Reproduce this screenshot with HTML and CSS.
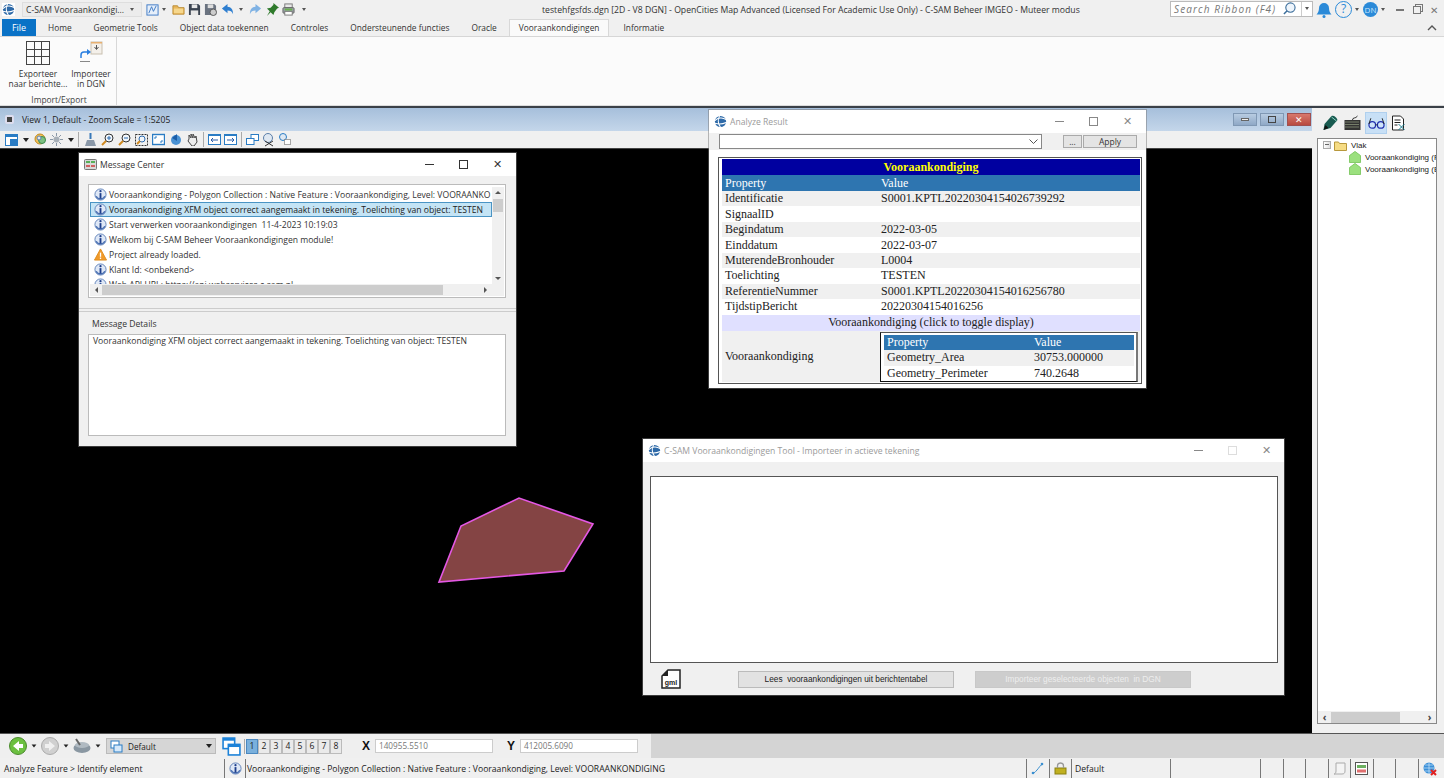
FILE: index.html
```html
<!DOCTYPE html>
<html lang="nl">
<head>
<meta charset="utf-8">
<title>OpenCities Map</title>
<link rel="stylesheet" href="styles.css">
</head>
<body>
<svg class="defs" width="0" height="0">
  <defs>
    <symbol id="info" viewBox="0 0 14 14"><circle cx="7" cy="7" r="6" fill="#dfe8f6" stroke="#5d7fb8"/><path d="M1.5 9a6 6 0 0 0 11 0l-1.5-.5a4.500 4.500 0 0 1-8 0z" fill="#4f74b4"/><rect x="6" y="5.500" width="2" height="6" fill="#1f3f8c"/><circle cx="7" cy="3.400" r="1.200" fill="#1f3f8c"/></symbol>
    <symbol id="warn" viewBox="0 0 14 14"><path d="M7 1l6.500 12H.5z" fill="#f09a2a" stroke="#e08a1a"/><rect x="6.300" y="5" width="1.400" height="4.500" fill="#fff"/><rect x="6.300" y="10.300" width="1.400" height="1.500" fill="#fff"/></symbol>
    <symbol id="globe" viewBox="0 0 14 14"><rect width="14" height="14" fill="#fff"/><circle cx="7" cy="7" r="6" fill="#2e6aa8"/><path d="M1 6c3-3 8-4 12-1M1 9c4 1 8 1 12-1M6 1c-2 3-2 9 1 12" fill="none" stroke="#fff" stroke-width="1.100"/></symbol>
    <symbol id="house" viewBox="0 0 13 13"><path d="M6.500.5l6 4.500v7.500h-12V5z" fill="#9be07e" stroke="#7cc760"/></symbol>
  </defs>
</svg>
<div class="app">
  <header class="titlebar">
    <svg class="ic13 ml2"><use href="#globe"/></svg>
    <div class="workflow"><span>C-SAM Vooraankondigi...</span><i class="caret-sm"></i></div>
    <svg class="qat" viewBox="0 0 14 14"><rect x="1" y="2" width="12" height="11" fill="#e6effa" stroke="#3b78c4"/><path d="M3 11l3-7 2 5 3-6" stroke="#3b78c4" fill="none"/></svg>
    <i class="caret-sm gap-a"></i>
    <svg class="qat gap-b" viewBox="0 0 14 14"><path d="M1 3h5l1 2h6v7H1z" fill="#eab75a" stroke="#b98a34"/><rect x="2" y="6" width="10" height="5" fill="#f6d78c"/></svg>
    <svg class="qat gap-c" viewBox="0 0 14 14"><path d="M1 1h10l2 2v10H1z" fill="#3a4350"/><rect x="4" y="1.500" width="6" height="4" fill="#e8e8e8"/><rect x="3" y="8" width="8" height="5" fill="#e8e8e8"/></svg>
    <svg class="qat gap-c" viewBox="0 0 14 14"><path d="M1 1h10l2 2v10H1z" fill="#6a7380"/><rect x="4" y="1.500" width="6" height="4" fill="#ddd"/><circle cx="10" cy="10" r="3.500" fill="#ccc" stroke="#555"/></svg>
    <svg class="qat gap-d" viewBox="0 0 14 14"><path d="M1 6l6-5v3c4 0 6 3 6 8-1-3-3-4-6-4v3z" fill="#2f7fd0"/></svg>
    <i class="caret-sm gap-e"></i>
    <svg class="qat gap-f" viewBox="0 0 14 14"><path d="M13 6L7 1v3C3 4 1 7 1 12c1-3 3-4 6-4v3z" fill="#7fb2e4"/></svg>
    <svg class="qat gap-g" viewBox="0 0 14 14"><path d="M8 0l6 5-2 1-3 4-1 3-3-3-4 4 3-5-3-3 4-1 3-3z" fill="#2f7a2c"/></svg>
    <svg class="qat gap-h" viewBox="0 0 14 14"><rect x="3" y="1" width="8" height="4" fill="#e8e8e8" stroke="#777"/><rect x="1" y="5" width="12" height="6" rx="1" fill="#9aa3a8" stroke="#666"/><rect x="3" y="9" width="8" height="4" fill="#fff" stroke="#777"/><rect x="3" y="6" width="8" height="2" fill="#68b04c"/></svg>
    <i class="caret-sm gap-i"></i>
    <div class="doc-title">testehfgsfds.dgn [2D - V8 DGN] - OpenCities Map Advanced (Licensed For Academic Use Only) - C-SAM Beheer IMGEO - Muteer modus</div>
    <div class="search"><em>Search Ribbon (F4)</em><svg class="qat" viewBox="0 0 14 14"><circle cx="8" cy="6" r="5" fill="#eef5fc" stroke="#3d6f9c" stroke-width="1.200"/><path d="M4.500 9.500L1 13" stroke="#3d6f9c" stroke-width="1.600"/></svg><span class="search-sep"></span><i class="caret-sm"></i></div>
    <svg class="bell" viewBox="0 0 16 16"><path d="M8 1a5 5 0 0 1 5 5c0 3 1 5 2.500 6.500h-15C2 11 3 9 3 6a5 5 0 0 1 5-5z" fill="#2b8ad8"/><circle cx="8" cy="14.500" r="1.500" fill="#2b8ad8"/></svg>
    <div class="help">?</div>
    <i class="caret-sm"></i>
    <div class="avatar">DN</div>
    <i class="caret-sm"></i>
    <div class="winctl">
      <span class="min-dark"></span>
      <span class="rest-dark"></span>
      <span class="x-dark">✕</span>
    </div>
  </header>

  <nav class="tabs">
    <div class="tab-file">File</div>
    <div class="tab tab-home">Home</div>
    <div class="tab">Geometrie Tools</div>
    <div class="tab">Object data toekennen</div>
    <div class="tab">Controles</div>
    <div class="tab">Ondersteunende functies</div>
    <div class="tab">Oracle</div>
    <div class="tab tab-active">Vooraankondigingen</div>
    <div class="tab">Informatie</div>
    <svg class="collapse" viewBox="0 0 10 6"><path d="M1 5l4-4 4 4" fill="none" stroke="#555" stroke-width="1.400"/></svg>
  </nav>

  <section class="ribbon">
    <div class="rgroup">
      <div class="rbtns">
        <div class="rbtn rbtn-a">
          <div class="gridicon"><i></i><i></i><i></i><i></i><i></i><i></i><i></i><i></i><i></i></div>
          <span>Exporteer<br>naar berichte...</span>
        </div>
        <div class="rbtn rbtn-b">
          <svg class="bigic" viewBox="0 0 24 24"><rect x="12" y="1" width="11" height="12" fill="#f4f0ea" stroke="#c9c0b0"/><rect x="12" y="1" width="11" height="1.500" fill="#e8b070"/><path d="M17.500 4v4m-2-2l2 2.500 2-2.500" stroke="#555" fill="none"/><path d="M2 17v-3c0-2 1-3 3-3h4" fill="none" stroke="#2a7fe0" stroke-width="1.500"/><path d="M8 8l4 3-4 3z" fill="#2a7fe0"/><rect x="1" y="20" width="10" height="1" fill="#888"/></svg>
          <span>Importeer<br>in DGN</span>
        </div>
      </div>
      <div class="rgroup-name">Import/Export</div>
    </div>
  </section>

  <main class="stage">
    <div class="view">
      <div class="viewbar">
        <span class="viewdot"></span>
        <span class="viewtitle">View 1, Default - Zoom Scale = 1:5205</span>
        <div class="viewctl">
          <span class="vbtn"><i class="vmin"></i></span>
          <span class="vbtn"><i class="vres"></i></span>
          <span class="vbtn vclose">✕</span>
        </div>
      </div>
      <div class="viewtools">
        <svg class="vt" viewBox="0 0 13 13"><rect x=".5" y="1.500" width="12" height="11" fill="#fff" stroke="#2a7cc4"/><rect y="1" width="13" height="3" fill="#2a7cc4"/><rect x="5" y="6" width="7" height="6" fill="#2a7cc4"/></svg>
        <i class="caret vt-c1"></i>
        <svg class="vt vt-g2" viewBox="0 0 13 13"><circle cx="6" cy="6" r="5" fill="#f2c05a" stroke="#c08a20"/><circle cx="8" cy="7" r="3.500" fill="#7cc080" stroke="#3c8a50"/><circle cx="5" cy="5" r="2" fill="#e8e8e8" stroke="#5a80b0"/></svg>
        <svg class="vt vt-g3" viewBox="0 0 13 13"><circle cx="6.500" cy="6.500" r="3" fill="#a8b0b8"/><path d="M6.500 0v3M6.500 10v3M0 6.500h3M10 6.500h3M2 2l2 2M9 9l2 2M11 2L9 4M2 11l2-2" stroke="#8a98a8"/></svg>
        <i class="caret vt-c1"></i>
        <i class="tsep vt-s1"></i>
        <svg class="vt vt-g4" viewBox="0 0 13 13"><rect x="5.500" y="0" width="2" height="6" fill="#3878b8"/><path d="M3 7h7l2 6H1z" fill="#8a98a8"/></svg>
        <svg class="vt vt-g5" viewBox="0 0 13 13"><circle cx="8" cy="5" r="4" fill="#f2f6fa" stroke="#333"/><path d="M6 5h4M8 3v4" stroke="#2a6ab0"/><path d="M5 8l-4 4" stroke="#d08a20" stroke-width="2"/></svg>
        <svg class="vt vt-g5" viewBox="0 0 13 13"><circle cx="8" cy="5" r="4" fill="#f2f6fa" stroke="#333"/><path d="M6 5h4" stroke="#2a6ab0"/><path d="M5 8l-4 4" stroke="#d08a20" stroke-width="2"/></svg>
        <svg class="vt vt-g5" viewBox="0 0 13 13"><rect x=".5" y="1.500" width="12" height="11" fill="none" stroke="#333" stroke-dasharray="2 1"/><circle cx="7" cy="6" r="3" fill="#f2f6fa" stroke="#2a6ab0"/><path d="M5 8l-3 3" stroke="#d08a20" stroke-width="2"/></svg>
        <svg class="vt vt-g5" viewBox="0 0 13 13"><rect x=".5" y="1.500" width="12" height="10" fill="#fff" stroke="#2a7cc4" stroke-width="1.400"/><path d="M3 4v2M3 4h2M10 9V7M10 9H8" stroke="#2a7cc4"/></svg>
        <svg class="vt vt-g5" viewBox="0 0 13 13"><circle cx="7" cy="7" r="5" fill="#4a92d4"/><path d="M8 1L3 5l5 3z" fill="#1c5ea8"/></svg>
        <svg class="vt vt-g5" viewBox="0 0 13 13"><path d="M3 6V2l2 3V1l2 4V1l2 4 1-2 1 6-3 4H6L2 8z" fill="#eee" stroke="#444"/></svg>
        <i class="tsep vt-s2"></i>
        <svg class="vt vt-g6" viewBox="0 0 13 13"><rect x=".5" y="1.500" width="12" height="10" fill="#fff" stroke="#2a7cc4"/><rect y="1" width="13" height="2" fill="#2a7cc4"/><path d="M3 7h7M3 7l2-2M3 7l2 2" stroke="#2a5ca8"/></svg>
        <svg class="vt vt-g7" viewBox="0 0 13 13"><rect x=".5" y="1.500" width="12" height="10" fill="#fff" stroke="#2a7cc4"/><rect y="1" width="13" height="2" fill="#2a7cc4"/><path d="M3 7h7M10 7L8 5M10 7L8 9" stroke="#2a5ca8"/></svg>
        <i class="tsep vt-s3"></i>
        <svg class="vt vt-g8" viewBox="0 0 13 13"><rect x="5" y="1.500" width="7.500" height="6" fill="#fff" stroke="#2a7cc4"/><rect x=".5" y="5.500" width="7.500" height="6" fill="#fff" stroke="#2a7cc4"/></svg>
        <svg class="vt14 vt-g9" viewBox="0 0 14 14"><circle cx="6" cy="5" r="4.500" fill="#dfe8f2" stroke="#5b7ea8"/><path d="M3 8l8 5M11 8l-8 5" stroke="#333"/></svg>
        <svg class="vt vt-g10" viewBox="0 0 13 13"><circle cx="5" cy="4" r="3.500" fill="#dfe8f2" stroke="#2a7cc4"/><rect x="6.500" y="6.500" width="6" height="5" fill="#fff" stroke="#555" stroke-dasharray="1 1"/></svg>
      </div>
      <div class="canvas">
        <svg class="poly" viewBox="0 0 160 90"><polygon points="4,87 26,31 84,3 158,29 129,76" fill="#844444" stroke="#e458e4" stroke-width="1.600"/></svg>
      </div>
    </div>
    <aside class="panel">
      <div class="ptabs">
        <svg class="pt pt-a" viewBox="0 0 16 16"><path d="M1 15l1-6 7-8c2-1 5 1 6 4l-7 8z" fill="#185a50"/><path d="M9 2l5 4" stroke="#8fd4c4"/><path d="M1 15l2-5 3 3z" fill="#111"/></svg>
        <svg class="pt pt-b" viewBox="0 0 16 16"><rect y="5" width="16" height="10" fill="#333"/><path d="M1 7h14M1 9.500h14M1 12h14" stroke="#b8c8a0" stroke-dasharray="1 1"/><path d="M8 5c0-3 3-1 5-4" stroke="#333" fill="none"/></svg>
        <div class="pt-on"><svg class="pt" viewBox="0 0 18 16"><circle cx="4.500" cy="10" r="3.500" fill="#cfe4fa" stroke="#2230b0" stroke-width="1.300"/><circle cx="13.500" cy="10" r="3.500" fill="#cfe4fa" stroke="#2230b0" stroke-width="1.300"/><path d="M8 10h2M1 9l2-6M17 9l-2-6" stroke="#222" fill="none"/></svg></div>
        <svg class="pt pt-d" viewBox="0 0 16 16"><path d="M2 1h8l3 3v11H2z" fill="#fff" stroke="#222"/><path d="M4 5h6M4 7.500h6M4 10h3" stroke="#222"/><path d="M8 9l6 6M14 9l-6 6" stroke="#1c7c8c"/></svg>
      </div>
      <div class="tree">
        <div class="tree-body">
          <div class="node"><span class="minus"></span><svg class="folder" viewBox="0 0 13 11"><path d="M.5 2h4l1 1.500h7v7H.5z" fill="#f6dc84" stroke="#b8983c"/></svg><span>Vlak</span></div>
          <div class="node node-c"><svg class="ic12"><use href="#house"/></svg><span>Vooraankondiging (F</span></div>
          <div class="node node-c"><svg class="ic12"><use href="#house"/></svg><span>Vooraankondiging (E</span></div>
        </div>
        <div class="hscroll"><b>‹</b><i></i><b>›</b></div>
      </div>
    </aside>
  </main>

  <footer class="tool-row">
    <div class="tool-left">
      <svg class="nav" viewBox="0 0 18 18"><circle cx="9" cy="9" r="8.500" fill="#6cc040" stroke="#4a8a2c"/><path d="M10 4L4 9l6 5v-3h4V7h-4z" fill="#fff"/></svg>
      <i class="caret t-c"></i>
      <svg class="nav t-n2" viewBox="0 0 18 18"><circle cx="9" cy="9" r="8.500" fill="#d0d0d0" stroke="#aaa"/><path d="M8 4l6 5-6 5v-3H4V7h4z" fill="#f0f0f0"/></svg>
      <i class="caret t-c"></i>
      <svg class="nav t-n3" viewBox="0 0 18 18"><ellipse cx="9" cy="11" rx="8.500" ry="5" fill="#8a97a2"/><ellipse cx="9" cy="8" rx="7" ry="3" fill="#b0bac2"/><path d="M3 2l4 6" stroke="#666" stroke-width="2"/></svg>
      <i class="caret t-c"></i>
      <div class="levelsel"><svg class="ic12b" viewBox="0 0 13 13"><rect x="1" y="1" width="8" height="7" fill="#fff" stroke="#2a7cc4"/><rect x="4" y="5" width="8" height="7" fill="#d4e8fa" stroke="#2a7cc4"/></svg><span>Default</span><i class="caret"></i></div>
      <svg class="copyic" viewBox="0 0 18 18"><rect x="1" y="1" width="11" height="10" fill="#fff" stroke="#1c82d8" stroke-width="1.500"/><rect x="1" y="1" width="11" height="2.500" fill="#1c82d8"/><rect x="6" y="7" width="11" height="10" fill="#fff" stroke="#1c82d8" stroke-width="1.500"/><rect x="6" y="7" width="11" height="2.500" fill="#1c82d8"/></svg>
      <div class="nums"><span class="num num-on">1</span><span class="num">2</span><span class="num">3</span><span class="num">4</span><span class="num">5</span><span class="num">6</span><span class="num">7</span><span class="num">8</span></div>
      <b class="axis axis-x">X</b><div class="coord">140955.5510</div>
      <b class="axis axis-y">Y</b><div class="coord">412005.6090</div>
    </div>
    <div class="tool-right"></div>
  </footer>

  <footer class="status">
    <div class="st st-1">Analyze Feature &gt; Identify element</div>
    <div class="st st-ic"><svg class="ic13"><use href="#info"/></svg></div>
    <div class="st st-msg">Vooraankondiging - Polygon Collection : Native Feature : Vooraankondiging, Level: VOORAANKONDIGING</div>
    <div class="st st-ic2"><svg class="ic13" viewBox="0 0 13 13"><path d="M1 11c3 0 3-1 5-3s3-5 6-6" fill="none" stroke="#3a8fd0"/><circle cx="2" cy="11" r="1.300" fill="#3a8fd0"/><circle cx="11" cy="2" r="1.300" fill="#3a8fd0"/></svg></div>
    <div class="st st-ic2"><svg class="ic13" viewBox="0 0 13 13"><rect x="1" y="6" width="11" height="6" fill="#c0b020" stroke="#8a8010"/><path d="M3.500 6V4a3 3 0 0 1 6 0v2" fill="none" stroke="#999" stroke-width="1.300"/></svg></div>
    <div class="st st-def">Default</div>
    <div class="st st-w1"></div>
    <div class="st st-w2"></div>
    <div class="st st-w2"></div>
    <div class="st st-w2"></div>
    <div class="st st-ic2"><svg class="ic13" viewBox="0 0 13 13"><path d="M3 1h9v8c0 2-1 3-3 3H1c1 0 2-1 2-3z" fill="#f4f4f4" stroke="#aaa"/></svg></div>
    <div class="st st-ic2"><svg class="ic13" viewBox="0 0 13 13"><rect x=".5" y=".5" width="12" height="12" fill="#fff" stroke="#555"/><rect x="2" y="3" width="9" height="3" fill="#6cb060"/><rect x="2" y="7.500" width="9" height="3" fill="#e07070"/></svg></div>
    <div class="st st-w2"></div>
    <div class="st st-w2"></div>
    <div class="st st-ic2 st-last"><svg class="ic14" viewBox="0 0 14 14"><circle cx="6" cy="6" r="5.500" fill="#3a8fd8"/><path d="M1 6h10M6 .5v11M2 3h8M2 9h8" stroke="#cfe6fa" stroke-width=".7"/><path d="M8 8l5 5M13 8l-5 5" stroke="#e02020" stroke-width="2"/></svg></div>
  </footer>

  <section class="win win-msg">
    <div class="win-title">
      <svg class="ic13" viewBox="0 0 13 13"><rect x=".5" y="1.500" width="12" height="10" rx="1" fill="#d8d8d8" stroke="#777"/><rect x="2" y="3" width="4" height="2" fill="#58b058"/><rect x="7" y="3" width="4" height="2" fill="#58b058"/><rect x="2" y="7" width="4" height="2" fill="#d06060"/><rect x="7" y="7" width="4" height="2" fill="#d06060"/></svg>
      <span class="win-name">Message Center</span>
      <div class="capt"><span class="c-min"></span><span class="c-max"></span><span class="c-x">✕</span></div>
    </div>
    <div class="msg-body">
      <div class="msg-list">
        <div class="msg-rows">
          <div class="msg-lines">
            <div class="msg"><svg class="ic13"><use href="#info"/></svg><span>Vooraankondiging - Polygon Collection : Native Feature : Vooraankondiging, Level: VOORAANKO</span></div>
            <div class="msg msg-sel"><svg class="ic13"><use href="#info"/></svg><span>Vooraankondiging XFM object correct aangemaakt in tekening. Toelichting van object: TESTEN</span></div>
            <div class="msg"><svg class="ic13"><use href="#info"/></svg><span>Start verwerken vooraankondigingen&nbsp; 11-4-2023 10:19:03</span></div>
            <div class="msg"><svg class="ic13"><use href="#info"/></svg><span>Welkom bij C-SAM Beheer Vooraankondigingen module!</span></div>
            <div class="msg"><svg class="ic13"><use href="#warn"/></svg><span>Project already loaded.</span></div>
            <div class="msg"><svg class="ic13"><use href="#info"/></svg><span>Klant Id: &lt;onbekend&gt;</span></div>
            <div class="msg"><svg class="ic13"><use href="#info"/></svg><span>Web API URI : https://api.webservices.c-sam.nl</span></div>
          </div>
          <div class="vscroll"><i class="arr-up"></i><u></u><i class="arr-down"></i></div>
        </div>
        <div class="msg-h"><i class="arr-left"></i><u></u><i class="arr-right"></i></div>
      </div>
      <div class="splitter"></div>
      <div class="details-label">Message Details</div>
      <div class="details">Vooraankondiging XFM object correct aangemaakt in tekening. Toelichting van object: TESTEN</div>
    </div>
  </section>

  <section class="win win-analyze">
    <div class="win-title win-title-off">
      <svg class="ic13"><use href="#globe"/></svg>
      <span class="win-name">Analyze Result</span>
      <div class="capt capt-off"><span class="c-min"></span><span class="c-max"></span><span class="c-x">✕</span></div>
    </div>
    <div class="an-tools">
      <div class="an-combo"><svg class="chev" viewBox="0 0 9 5"><path d="M.5.500L4.500 4.500 8.500.5" fill="none" stroke="#555"/></svg></div>
      <div class="an-btn an-dots">...</div>
      <div class="an-btn an-apply">Apply</div>
    </div>
    <div class="an-body">
      <div class="an-frame">
        <table class="res">
          <colgroup><col class="col-a"><col></colgroup>
          <tr class="r-title"><td colspan="2">Vooraankondiging</td></tr>
          <tr class="r-head"><td>Property</td><td>Value</td></tr>
          <tr class="r-alt"><td>Identificatie</td><td>S0001.KPTL20220304154026739292</td></tr>
          <tr><td>SignaalID</td><td></td></tr>
          <tr class="r-alt"><td>Begindatum</td><td>2022-03-05</td></tr>
          <tr><td>Einddatum</td><td>2022-03-07</td></tr>
          <tr class="r-alt"><td>MuterendeBronhouder</td><td>L0004</td></tr>
          <tr><td>Toelichting</td><td>TESTEN</td></tr>
          <tr class="r-alt"><td>ReferentieNummer</td><td>S0001.KPTL20220304154016256780</td></tr>
          <tr><td>TijdstipBericht</td><td>20220304154016256</td></tr>
          <tr class="r-toggle"><td colspan="2">Vooraankondiging (click to toggle display)</td></tr>
          <tr class="r-alt r-nest">
            <td>Vooraankondiging</td>
            <td class="nest-cell">
              <div class="nest-frame">
                <table class="res nest">
                  <colgroup><col class="col-n"><col></colgroup>
                  <tr class="r-head"><td>Property</td><td>Value</td></tr>
                  <tr class="r-alt"><td>Geometry_Area</td><td>30753.000000</td></tr>
                  <tr><td>Geometry_Perimeter</td><td>740.2648</td></tr>
                </table>
              </div>
            </td>
          </tr>
        </table>
      </div>
    </div>
  </section>

  <section class="win win-import">
    <div class="win-title win-title-off">
      <svg class="ic13"><use href="#globe"/></svg>
      <span class="win-name">C-SAM Vooraankondigingen Tool - Importeer in actieve tekening</span>
      <div class="capt capt-off capt-imp"><span class="c-min"></span><span class="c-max c-faint"></span><span class="c-x">✕</span></div>
    </div>
    <div class="imp-body">
      <div class="imp-list"></div>
      <div class="imp-actions">
        <svg class="gml" viewBox="0 0 20 20"><path d="M7 1h12v18H1V7z" fill="#fff" stroke="#222" stroke-width="1.500"/><path d="M1 7l6-6v6z" fill="#222"/><text x="10" y="16" text-anchor="middle" class="gml-t">gml</text></svg>
        <div class="imp-btn">Lees&nbsp; vooraankondigingen uit berichtentabel</div>
        <div class="imp-btn imp-off">Importeer geselecteerde objecten&nbsp; in DGN</div>
      </div>
    </div>
  </section>
</div>
</body>
</html>
```

FILE: styles.css
```css
* { box-sizing: border-box; }
html, body { margin: 0; padding: 0; height: 100%; overflow: hidden; background: #000; }
body { font-family: "Open Sans", "Noto Sans", sans-serif; font-size: 8.6px; color: #222; }
.defs { position: absolute; }
svg { display: block; flex: none; }
i { display: block; flex: none; }

.app { position: relative; width: 1444px; height: 778px; display: flex; flex-direction: column; overflow: hidden; }
.ic12 { width: 12px; height: 12px; }
.ic13 { width: 13px; height: 13px; }
.ic14 { width: 14px; height: 14px; }
.ic12b { width: 13px; height: 13px; }
.ml2 { margin-left: 2px; }

.caret-sm { width: 0; height: 0; border: 2.5px solid transparent; border-top: 3px solid #555; border-bottom: 0; }
.caret { width: 0; height: 0; border: 3.5px solid transparent; border-top: 4px solid #222; border-bottom: 0; }

/* title row */
.titlebar { height: 19px; flex: none; background: #f0f0f0; display: flex; align-items: center; }
.workflow { width: 120px; height: 15px; margin-left: 7px; background: #ececec; border: 1px solid #dedede; display: flex; align-items: center; justify-content: space-between; padding: 0 7px 0 3px; color: #333; white-space: nowrap; }
.qat { width: 13px; height: 13px; }
.workflow + .qat { margin-left: 4px; }
.gap-a { margin-left: 3px; }
.gap-b { margin-left: 6px; }
.gap-c { margin-left: 3px; }
.gap-d { margin-left: 4px; }
.gap-e { margin-left: 5px; }
.gap-f { margin-left: 6px; }
.gap-g { margin-left: 4px; }
.gap-h { margin-left: 3px; }
.gap-i { margin-left: 7px; }
.doc-title { margin-left: 236px; width: 540px; white-space: nowrap; color: #333; font-size: 8.66px; }
.search { width: 143px; height: 16px; margin-left: 88px; margin-top: -2px; background: #fff; border: 1px solid #bbb; display: flex; align-items: center; padding-left: 3px; }
.search em { flex: 1; color: #777; font-size: 10px; letter-spacing: 1.1px; white-space: nowrap; }
.search-sep { width: 1px; height: 14px; background: #ccc; margin: 0 3px 0 5px; }
.search .caret-sm { margin-right: 3px; }
.bell { width: 16px; height: 16px; margin-left: 3px; }
.help { width: 17px; height: 17px; margin-left: 3px; margin-right: 3px; border: 1.5px solid #2b8ad8; border-radius: 50%; color: #2b8ad8; font-size: 12px; line-height: 14px; text-align: center; }
.avatar { width: 15px; height: 15px; margin-left: 4px; margin-right: 3px; border-radius: 50%; background: #2b8ad8; color: #cde6fa; font-size: 8px; line-height: 15px; text-align: center; }
.winctl { display: flex; align-items: center; margin-left: 11px; }
.min-dark { width: 8px; height: 2px; background: #777; }
.rest-dark { width: 8px; height: 8px; margin-left: 9px; border: 1px solid #777; box-shadow: 2px -2px 0 -1px #f0f0f0, 2px -2px 0 0 #777; }
.x-dark { margin-left: 9px; font-size: 10px; color: #777; line-height: 10px; }

/* tabs */
.tabs { height: 17px; flex: none; background: #f0f0f0; display: flex; align-items: stretch; padding-left: 2px; position: relative; }
.tab-file { width: 34px; background: #0a72c6; color: #fff; text-align: center; line-height: 17px; font-size: 9px; }
.tab { margin-left: 22px; line-height: 17px; color: #333; white-space: nowrap; font-size: 8.35px; }
.tab-home { margin-left: 12px; }
.tab-active { margin-left: 12px; padding: 0 9px; background: #fafafa; border: 1px solid #d8d8d8; border-bottom: 0; line-height: 16px; }
.tab-active + .tab { margin-left: 14px; }
.collapse { position: absolute; right: 7px; top: 6px; width: 10px; height: 6px; }

/* ribbon */
.ribbon { height: 70px; flex: none; background: #fbfbfb; border-top: 1px solid #d6d6d6; border-bottom: 1px solid #dcdcdc; padding-left: 2px; display: flex; }
.rgroup { width: 115px; border-right: 1px solid #d8d8d8; display: flex; flex-direction: column; }
.rbtns { display: flex; height: 58px; }
.rbtn { display: flex; flex-direction: column; align-items: center; font-size: 8.4px; line-height: 9.5px; text-align: center; color: #333; white-space: nowrap; }
.rbtn-a { width: 72px; padding-top: 4px; }
.rbtn-b { width: 34px; padding-top: 4px; }
.rbtn span { margin-top: 4px; }
.gridicon { width: 24px; height: 24px; border: 1px solid #444; display: grid; grid-template-columns: repeat(3, 1fr); grid-template-rows: repeat(3, 1fr); gap: 1px; background: #444; }
.gridicon i { background: #fbfbfb; }
.bigic { width: 24px; height: 24px; }
.rgroup-name { text-align: center; font-size: 8.4px; color: #444; margin-top: 1px; }

/* stage */
.stage { flex: 1; min-height: 0; display: flex; border-top: 2px solid #3a4048; }
.view { flex: 1; min-width: 0; display: flex; flex-direction: column; }
.viewbar { height: 23px; flex: none; background: linear-gradient(#a6bfdb, #c4d6ea); display: flex; align-items: center; padding-left: 5px; }
.viewdot { width: 9px; height: 9px; background: #444; border: 2px solid #dde; border-radius: 2px; }
.viewtitle { margin-left: 8px; font-size: 8.55px; color: #222; }
.viewctl { margin-left: auto; display: flex; gap: 3px; padding-right: 1px; }
.vbtn { width: 24px; height: 13px; border: 1px solid #8098b4; background: linear-gradient(#b8cce2, #8fa8c6); display: flex; align-items: center; justify-content: center; }
.vmin { width: 8px; height: 3px; background: #eee; border: 1px solid #666; }
.vres { width: 8px; height: 7px; background: transparent; border: 1px solid #444; }
.vclose { background: linear-gradient(#d8786c, #b84a40); color: #fff; font-size: 9px; line-height: 11px; border-color: #a05050; }

.viewtools { height: 18px; flex: none; background: #f0f0f0; display: flex; align-items: center; padding-left: 5px; border-bottom: 1px solid #444; }
.vt { width: 13px; height: 13px; }
.vt14 { width: 14px; height: 14px; }
.vt-c1 { margin-left: 5px; }
.vt-g2 { margin-left: 5px; }
.vt-g3 { margin-left: 3px; }
.tsep { width: 1px; height: 15px; background: #aaa; }
.vt-s1 { margin-left: 4px; }
.vt-g4 { margin-left: 5px; }
.vt-g5 { margin-left: 4px; }
.vt-s2 { margin-left: 4px; }
.vt-g6 { margin-left: 4px; }
.vt-g7 { margin-left: 3px; }
.vt-s3 { margin-left: 4px; }
.vt-g8 { margin-left: 4px; }
.vt-g9 { margin-left: 3px; }
.vt-g10 { margin-left: 2px; }

.canvas { flex: 1; background: #000; position: relative; }
.poly { position: absolute; left: 435px; top: 346px; width: 160px; height: 90px; }

/* side panel */
.panel { width: 132px; flex: none; background: #f0f0f0; padding: 3px 7px 9px 5px; display: flex; flex-direction: column; }
.ptabs { height: 24px; display: flex; align-items: center; flex: none; }
.pt { width: 17px; height: 16px; }
.pt-a { margin-left: 5px; }
.pt-b { margin-left: 5px; }
.pt-on { margin-left: 4px; width: 22px; height: 22px; background: #c8e0f6; border: 1px solid #b0d0ee; display: flex; align-items: center; justify-content: center; }
.pt-d { margin-left: 3px; }
.tree { flex: 1; margin-top: 3px; background: #fff; border: 1px solid #888; display: flex; flex-direction: column; min-height: 0; }
.tree-body { flex: 1; font-family: "Liberation Sans", sans-serif; font-size: 8px; color: #222; overflow: hidden; white-space: nowrap; }
.node { height: 12px; display: flex; align-items: center; padding-left: 5px; }
.minus { width: 8px; height: 8px; border: 1px solid #aaa; background: linear-gradient(90deg, #fff, #ddd); position: relative; }
.minus::after { content: ""; position: absolute; left: 1px; right: 1px; top: 2px; height: 1px; background: #666; }
.folder { width: 13px; height: 11px; margin-left: 3px; margin-right: 4px; }
.node-c { padding-left: 31px; }
.node-c span { margin-left: 4px; }
.hscroll { height: 12px; flex: none; background: #f0f0f0; display: flex; align-items: center; font-size: 10px; }
.hscroll b { width: 13px; text-align: center; font-weight: 700; line-height: 10px; color: #444; }
.hscroll i { width: 69px; height: 11px; background: #cdcdcd; }
.hscroll b:last-child { margin-left: auto; }

/* bottom rows */
.tool-row { height: 25px; flex: none; display: flex; border-top: 1px solid #555; }
.tool-left { width: 651px; flex: none; background: #efefef; display: flex; align-items: center; padding-left: 9px; }
.tool-right { flex: 1; background: #d4d4d4; }
.nav { width: 18px; height: 18px; }
.t-c { margin-left: 4px; transform: scale(.8); }
.t-n2 { margin-left: 4px; }
.t-n3 { margin-left: 4px; }
.levelsel { width: 110px; height: 16px; margin-left: 5px; background: #d6d6d6; border: 1px solid #bbb; display: flex; align-items: center; padding: 0 3px; font-size: 8.2px; color: #222; }
.levelsel span { flex: 1; margin-left: 5px; }
.copyic { width: 19px; height: 19px; margin-left: 6px; }
.nums { display: flex; margin-left: 3px; padding-left: 1px; border-left: 1px solid #aaa; }
.num { width: 12px; height: 15px; border: 1px solid #bbb; background: #eaeaea; font-size: 8.6px; line-height: 13px; text-align: center; color: #222; }
.num-on { background: #7ab0dc; border-color: #4a88c0; }
.axis { font-family: "Liberation Sans", sans-serif; font-size: 12px; color: #111; }
.axis-x { margin-left: 20px; width: 13px; }
.axis-y { margin-left: 14px; width: 13px; }
.coord { width: 118px; height: 14px; background: #fff; border: 1px solid #ccc; font-size: 8.2px; line-height: 12px; padding-left: 3px; color: #777; }

.status { height: 20px; flex: none; background: #f0f0f0; display: flex; align-items: stretch; color: #222; white-space: nowrap; }
.st { display: flex; align-items: center; border-right: 1px solid #777; margin: 1px 0 0; }
.st-1 { width: 225px; padding-left: 4px; }
.st-ic { width: 21px; padding-left: 4px; }
.st-msg { width: 781px; padding-left: 1px; }
.st-ic2 { width: 22.5px; justify-content: center; }
.st-def { width: 99px; padding-left: 3px; }
.st-w1 { width: 90px; }
.st-w2 { width: 22.5px; }
.st-last { border-right: 0; }

/* floating windows */
.win { position: absolute; background: #f0f0f0; display: flex; flex-direction: column; box-shadow: 0 0 0 1px rgba(120,120,120,.5); }
.win-msg { left: 79px; top: 153px; width: 437px; height: 293px; }
.win-analyze { left: 709px; top: 110px; width: 437px; height: 278px; }
.win-import { left: 643px; top: 439px; width: 641px; height: 256px; }
.win-title { height: 23px; flex: none; background: #fff; display: flex; align-items: center; padding-left: 5px; }
.win-name { margin-left: 3px; color: #333; }
.win-title-off .win-name { color: #9a9a9a; }
.capt { margin-left: auto; display: flex; align-items: center; width: 91px; }
.c-min { width: 9px; height: 1px; background: #333; }
.c-max { width: 9px; height: 9px; margin-left: 25px; border: 1px solid #333; }
.c-x { margin-left: 25px; font-size: 11px; line-height: 11px; color: #333; font-family: "DejaVu Sans", sans-serif; }
.capt-off .c-min { background: #888; }
.capt-off .c-max { border-color: #888; }
.capt-off .c-x { color: #888; }
.capt-off { width: 91px; }
.capt-imp { width: 90px; }
.c-faint { border-color: #ddd !important; }

/* message center */
.msg-body { flex: 1; padding: 8px 10px 10px 9px; display: flex; flex-direction: column; min-height: 0; }
.msg-list { height: 114px; flex: none; background: #fff; border: 1px solid #bbb; padding: 2px 1px 1px; display: flex; flex-direction: column; }
.msg-rows { flex: 1; display: flex; min-height: 0; }
.msg-lines { flex: 1; min-width: 0; overflow: hidden; }
.msg { height: 15px; display: flex; align-items: center; padding-left: 3px; color: #333; white-space: nowrap; border: 1px solid transparent; overflow: hidden; }
.msg span { margin-left: 2px; }
.msg-sel { background: #c4e4f5; border-color: #4a94c4; color: #222; }
.vscroll { width: 12px; background: #f0f0f0; display: flex; flex-direction: column; align-items: center; position: relative; }
.vscroll u { position: absolute; left: 1px; right: 1px; top: 12px; height: 13px; background: #cdcdcd; }
.vscroll .arr-up { margin-top: 4px; }
.vscroll .arr-down { margin-top: auto; margin-bottom: 4px; }
.arr-up { width: 0; height: 0; border: 3px solid transparent; border-bottom: 3px solid #555; border-top: 0; }
.arr-down { width: 0; height: 0; border: 3px solid transparent; border-top: 3px solid #555; border-bottom: 0; }
.msg-h { height: 12px; flex: none; background: #f0f0f0; display: flex; align-items: center; padding-left: 5px; }
.msg-h u { width: 341px; height: 10px; margin-left: 4px; background: #cdcdcd; }
.arr-left { width: 0; height: 0; border: 3px solid transparent; border-right: 3px solid #555; border-left: 0; }
.arr-right { width: 0; height: 0; border: 3px solid transparent; border-left: 3px solid #555; border-right: 0; margin-left: 41px; }
.splitter { height: 4px; flex: none; margin: 10px -10px 0 -9px; border-top: 1px solid #ccc; border-bottom: 1px solid #ccc; }
.details-label { margin-top: 6px; height: 16px; color: #333; line-height: 12px; padding-left: 4px; }
.details { flex: 1; background: #fff; border: 1px solid #bbb; padding: 0 4px; color: #333; line-height: 13px; }

/* analyze */
.an-tools { height: 17px; flex: none; display: flex; align-items: center; padding-left: 10px; background: #f0f0f0; }
.an-combo { width: 323px; height: 15px; background: #fff; border: 1px solid #888; display: flex; align-items: center; justify-content: flex-end; padding-right: 3px; }
.chev { width: 9px; height: 5px; }
.an-btn { height: 13px; background: #e4e4e4; border: 1px solid #aaa; font-size: 8.5px; line-height: 11px; text-align: center; color: #333; }
.an-dots { width: 19px; margin-left: 21px; }
.an-apply { width: 54px; margin-left: 1px; }
.an-body { flex: 1; background: #fff; padding: 7px 4px 4px 9px; min-height: 0; }
.an-frame { height: 100%; border: 1px solid #555; padding: 1px 1px 1px 3px; }
.res { width: 100%; border-collapse: collapse; font-family: "Liberation Serif", serif; font-size: 12px; color: #222; table-layout: fixed; }
.res td { padding: 0 0 0 3px; height: 15.45px; line-height: 13px; white-space: nowrap; }
.col-a { width: 156px; }
.col-n { width: 147px; }
.r-title > td { background: #0000a0; color: #ff0; font-weight: 700; text-align: center; height: 16px; padding: 0; }
.r-head > td { background: #2e75b0; color: #fff; height: 16px; }
.r-alt > td { background: #f0f0f0; }
.r-toggle > td { background: #e0e0ff; text-align: center; padding: 0; height: 16px; }
.r-nest > td { height: 50px; }
.res .nest-cell { padding: 1px 2px 0 2px; }
.nest-frame { border: 1px solid #111; border-top-color: #555; border-right: 2px solid #777; padding: 2px 2px 0 3px; background: #fff; height: 50px; }
.nest td { height: 15.5px; }

/* import */
.imp-body { flex: 1; padding: 14px 6px 6px 7px; display: flex; flex-direction: column; min-height: 0; }
.imp-list { height: 187px; flex: none; background: #fff; border: 1px solid #555; }
.imp-actions { flex: 1; display: flex; align-items: flex-start; padding-top: 8px; }
.gml { width: 20px; height: 20px; margin-left: 11px; margin-top: -2px; }
.gml-t { font-family: "Liberation Sans", sans-serif; font-size: 7px; font-weight: 700; fill: #222; }
.imp-btn { width: 216px; height: 17px; background: #e2e2e2; border: 1px solid #bbb; font-family: "Liberation Sans", sans-serif; font-size: 8.3px; line-height: 15px; text-align: center; color: #222; margin-left: 57px; white-space: nowrap; }
.imp-off { margin-left: 21px; background: #cdcdcd; border-color: #c8c8c8; color: #eee; }
```
